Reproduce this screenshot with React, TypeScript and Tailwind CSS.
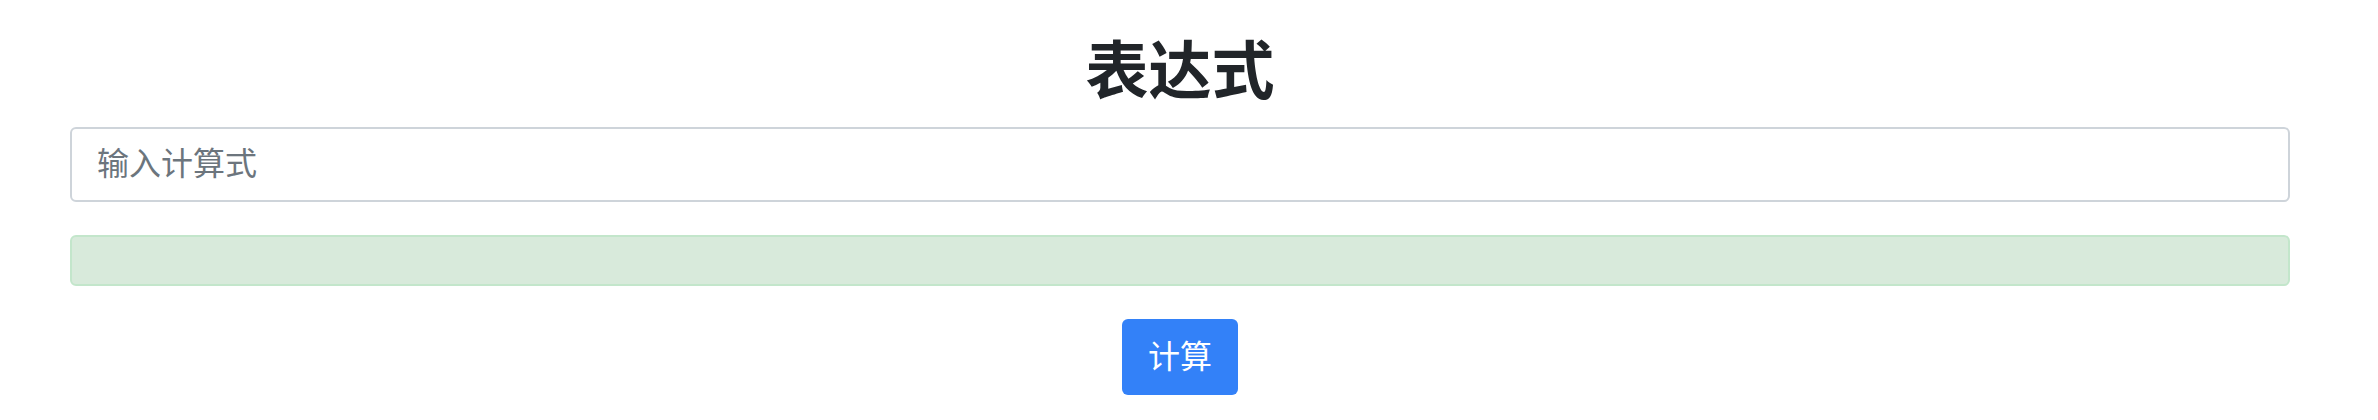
import { useState } from "react";

export default function App() {
  const [expr, setExpr] = useState("");

  return (
    <div
      className="h-[420px] overflow-hidden bg-white pt-[35px] pl-[70px] pr-[88px]"
      style={{ fontFamily: '"Liberation Sans", "Noto Sans CJK SC", sans-serif' }}
    >
      <h1 className="mb-[19px] text-center text-[63px] leading-[73px] font-bold text-[#212529]">
        表达式
      </h1>
      <input
        type="text"
        value={expr}
        onChange={(e) => setExpr(e.target.value)}
        placeholder="输入计算式"
        className="block h-[75px] w-full rounded-[6px] border-2 border-[#ced4da] bg-white px-[25px] text-[32px] text-[#495057] outline-none placeholder:text-[#6c757d]"
      />
      <div className="mt-[33px] h-[51px] w-full rounded-[6px] border-2 border-[#c3e6cb] bg-[#d8eadb]" />
      <div className="mt-[33px] flex justify-center">
        <button
          type="button"
          className="h-[76px] w-[116px] rounded-[6px] bg-[#3381f8] text-[32px] text-white"
        >
          计算
        </button>
      </div>
    </div>
  );
}
